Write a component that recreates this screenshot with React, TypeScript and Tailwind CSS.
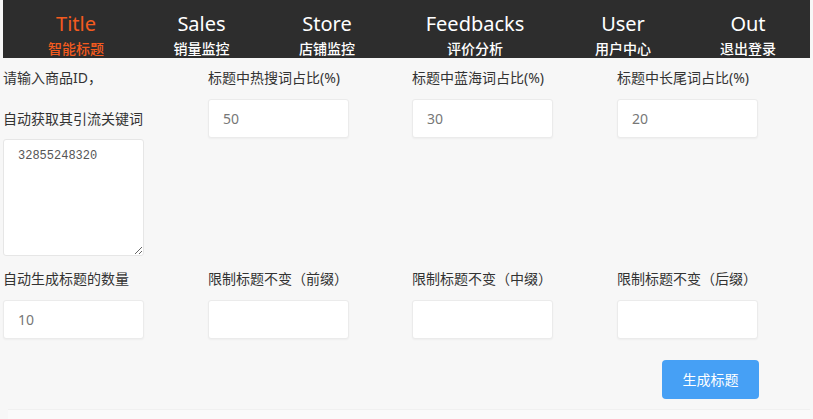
import React from 'react';

const navItems = [
  { en: 'Title', zh: '智能标题', w: 'w-[126px]', active: true },
  { en: 'Sales', zh: '销量监控', w: 'w-[125px]' },
  { en: 'Store', zh: '店铺监控', w: 'w-[126px]' },
  { en: 'Feedbacks', zh: '评价分析', w: 'w-[170px]' },
  { en: 'User', zh: '用户中心', w: 'w-[126px]' },
  { en: 'Out', zh: '退出登录', w: 'w-[124px]' },
];

const font = { fontFamily: '"Noto Sans", "Noto Sans CJK SC", sans-serif' };

function Field({ label, value }: { label: string; value?: string }) {
  return (
    <div className="flex flex-col">
      <label className="text-[14px] leading-[20px] text-[#333]">{label}</label>
      <input
        defaultValue={value}
        className="mt-[11px] w-[141px] h-[39px] bg-white border border-[#ebebeb] rounded-[3px] px-[14px] text-[14px] text-[#777] outline-none shadow-[0_1px_2px_rgba(0,0,0,0.04)]"
      />
    </div>
  );
}

export default function App() {
  return (
    <div className="w-[813px] h-[419px] overflow-hidden bg-[#f7f7f7] relative" style={font}>
      {/* Nav */}
      <div className="ml-[3px] mr-[3px] h-[58px] bg-[#2d2d2d] flex pl-[10px]">
        {navItems.map((n) => (
          <div key={n.en} className={`${n.w} flex flex-col items-center pt-[10px]`}>
            <span
              className={`text-[20px] leading-[28px] ${n.active ? 'text-[#f35b1f]' : 'text-white'}`}
            >
              {n.en}
            </span>
            <span
              className={`mt-[1px] text-[14px] leading-[20px] font-medium ${n.active ? 'text-[#f35b1f]' : 'text-white'}`}
            >
              {n.zh}
            </span>
          </div>
        ))}
      </div>

      {/* Form */}
      <div className="pl-[3px] pt-[10px]">
        <div className="grid grid-cols-[205px_204px_205px_199px] items-start">
          <div className="flex flex-col">
            <span className="text-[14px] leading-[20px] text-[#333]">请输入商品ID，</span>
            <span className="mt-[21px] text-[14px] leading-[20px] text-[#333]">自动获取其引流关键词</span>
            <textarea
              defaultValue="32855248320"
              className="mt-[10px] w-[141px] h-[117px] bg-white border border-[#e6e6e6] rounded-[3px] px-[14px] py-[8px] text-[12px] leading-[16px] text-[#555] outline-none"
              style={{ fontFamily: '"Liberation Mono", monospace' }}
            />
          </div>
          <Field label="标题中热搜词占比(%)" value="50" />
          <Field label="标题中蓝海词占比(%)" value="30" />
          <Field label="标题中长尾词占比(%)" value="20" />
        </div>

        <div className="mt-[13px] grid grid-cols-[205px_204px_205px_199px] items-start">
          <Field label="自动生成标题的数量" value="10" />
          <Field label="限制标题不变（前缀）" />
          <Field label="限制标题不变（中缀）" />
          <Field label="限制标题不变（后缀）" />
        </div>

        <div className="mt-[21px] flex justify-end pr-[54px]">
          <button className="w-[97px] h-[39px] rounded-[4px] bg-[#46a0f5] text-white text-[14px]">
            生成标题
          </button>
        </div>

        <div className="mt-[10px] ml-[5px] mr-[3px] h-[12px] bg-[#fafafa] border-t border-[#f0f0f0]" />
      </div>
    </div>
  );
}
